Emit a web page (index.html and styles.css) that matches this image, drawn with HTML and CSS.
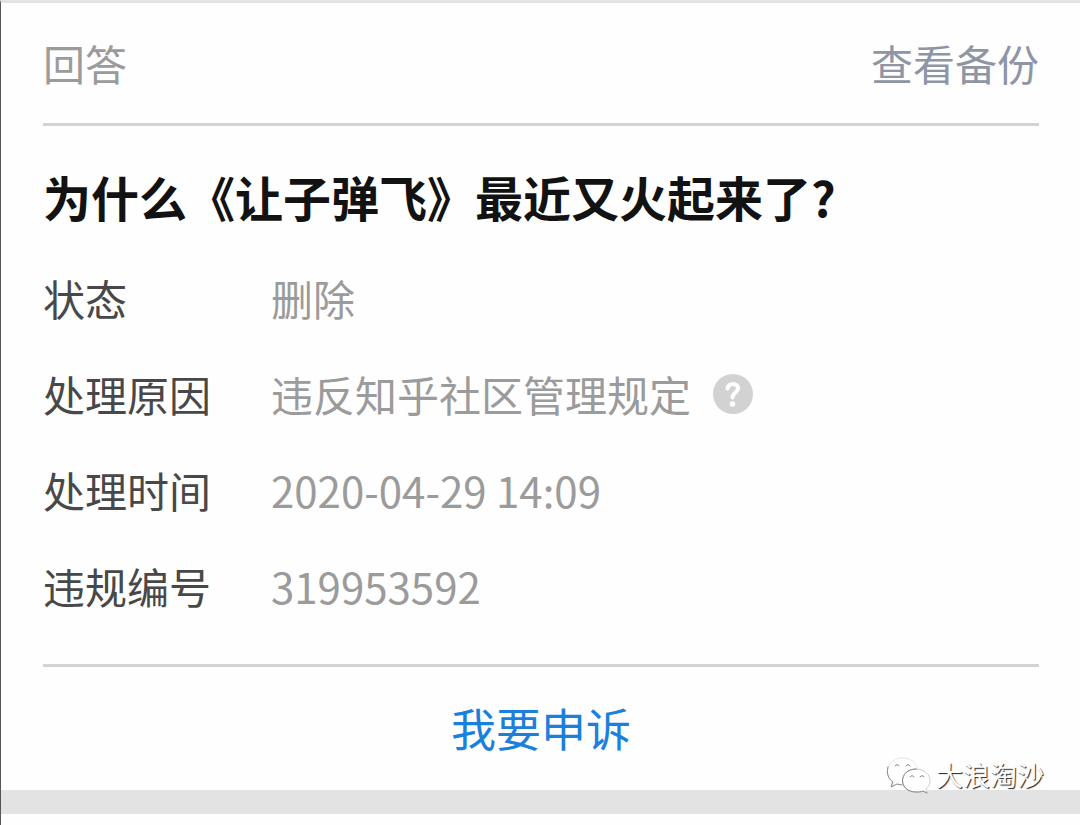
FILE: index.html
```html
<!DOCTYPE html>
<html lang="zh-CN">
<head>
    <meta charset="UTF-8">
    <meta name="viewport" content="width=device-width, initial-scale=1.0">
    <title>为什么《让子弹飞》最近又火起来了?</title>
    <link rel="stylesheet" href="styles.css">
</head>
<body>
    <main class="card">
        <header class="card-header">
            <span class="type">回答</span>
            <a class="backup" href="#">查看备份</a>
        </header>

        <section class="detail">
            <h1>为什么《让子弹飞》最近又火起来了?</h1>
            <dl class="info">
                <dt>状态</dt>
                <dd>删除</dd>
                <dt>处理原因</dt>
                <dd>
                    违反知乎社区管理规定
                    <button class="help" type="button" aria-label="帮助">
                        <svg viewBox="0 0 40 40" width="40" height="40">
                            <circle cx="20" cy="20" r="20" fill="#d2d2d2"/>
                            <path d="M14.5 14.5C15 8.500 25 8.500 25 14.5C25 18.5 19.5 18.5 19.5 23.5" fill="none" stroke="#fff" stroke-width="4" stroke-linecap="round"/>
                            <circle cx="19.500" cy="30" r="2.800" fill="#fff"/>
                        </svg>
                    </button>
                </dd>
                <dt>处理时间</dt>
                <dd>2020-04-29 14:09</dd>
                <dt>违规编号</dt>
                <dd>319953592</dd>
            </dl>
        </section>

        <button class="appeal" type="button">我要申诉</button>
    </main>

    <!-- Wasserzeichen -->
    <div class="watermark">
        <svg viewBox="0 0 46 38" width="46" height="38" fill="#fff" stroke="#888" stroke-linecap="round">
            <path d="M8 29L5 31L6 26C-2 19 0 5 14 2C24 1 31 7 32 14" stroke="#e6e6e6"/>
            <path d="M2 11C0 18 3 23 7 26L5 31L11 28L16 29" fill="none"/>
            <path d="M30 13C12 13 12 36 30 36C33 36 35 36 37 35L41 37L40 33C49 25 42 13 30 13Z" stroke="#ccc"/>
            <path d="M30 13C12 13 12 36 30 36C33 36 35 36 37 35L41 37" fill="none"/>
            <path d="M9 10Q11 7 13 10M20 10Q22 7 24 10M24 21Q26 18 28 21M34 21Q36 18 38 21" fill="none"/>
        </svg>
        <span>大浪淘沙</span>
    </div>
</body>
</html>
```

FILE: styles.css
```css
body {
    font-family: "Noto Sans CJK SC", sans-serif;
    margin: 0;
    min-height: 100vh;
    box-sizing: border-box;
    border-top: 3px solid #e3e3e3;
    border-left: 1px solid #555;
    background: #fefefe;
    color: #484848;
    font-size: 42px;
    line-height: 64px;
    position: relative;
}

.card {
    padding: 0 41px 0 42px;
    border-bottom: 24px solid #e3e3e3;
}

/* Kopfzeile */
.card-header {
    display: flex;
    justify-content: space-between;
    align-items: center;
    padding: 28px 0;
    border-bottom: 3px solid #d3d3d3;
}

.type {
    color: #9b9b9b;
}

.backup {
    color: #8e96a5;
    text-decoration: none;
}

.detail {
    padding: 38px 0 30px;
    border-bottom: 3px solid #d3d3d3;
}

h1 {
    margin: 0 0 22px;
    color: #121212;
    font-size: 48px;
    font-weight: bold;
}

.info {
    display: grid;
    grid-template-columns: 228px 1fr;
    margin: 0;
}

.info dt, .info dd {
    margin: 0;
    padding: 16px 0;
}

.info dd {
    display: flex;
    align-items: center;
    gap: 22px;
    color: #9b9b9b;
}

.help {
    display: flex;
    padding: 0;
    border: none;
    background: none;
    cursor: pointer;
}

.appeal {
    display: block;
    width: 100%;
    padding: 29px 0 30px;
    border: none;
    background: none;
    color: #1a80dc;
    font-family: inherit;
    font-size: 45px;
    line-height: 64px;
    cursor: pointer;
}

/* Wasserzeichen unten rechts über der Karte */
.watermark {
    position: absolute;
    right: 36px;
    bottom: 30px;
    display: flex;
    align-items: center;
    gap: 4px;
    color: #fff;
    font-size: 27px;
    line-height: 40px;
    text-shadow: 1px 1px 1px #222;
}
```
